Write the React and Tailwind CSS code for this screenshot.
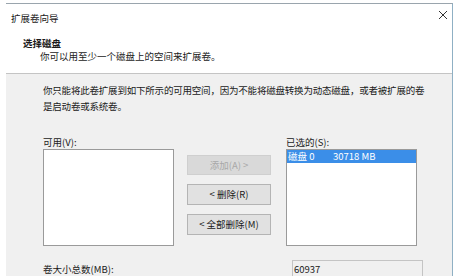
export default function App() {
  const f = { fontFamily: '"Noto Sans CJK SC", "Noto Sans", sans-serif' };
  return (
    <div className="w-[459px] h-[276px] bg-white overflow-hidden text-[#1a1a1a] text-[9.5px]" style={f}>
      <div className="ml-[6px] mt-[3px] w-[447px] h-[273px] border-t border-t-[#9aa5ad] border-r border-r-[#8fb0c4] flex flex-col">
        {/* header */}
        <div className="h-[70px] shrink-0 bg-white border-b border-b-[#c4c4c4] relative pl-[5px] pt-[7px]">
          <div className="leading-[14px]">扩展卷向导</div>
          <svg className="absolute right-[4px] top-[6px]" width="10" height="10" viewBox="0 0 10 10">
            <path d="M1 1 L9 9 M9 1 L1 9" stroke="#333" strokeWidth="1" fill="none" />
          </svg>
          <div className="pl-[12px] mt-[12px] font-bold leading-[13px]">选择磁盘</div>
          <div className="pl-[29px] leading-[13px]">你可以用至少一个磁盘上的空间来扩展卷。</div>
        </div>
        {/* body */}
        <div className="flex-1 bg-[#f0f0f0] pl-[37px] pt-[8px]">
          <div className="leading-[16px] tracking-[-0.2px]">
            <div>你只能将此卷扩展到如下所示的可用空间，因为不能将磁盘转换为动态磁盘，或者被扩展的卷</div>
            <div>是启动卷或系统卷。</div>
          </div>
          <div className="flex mt-[22px]">
            <div className="w-[131px] flex flex-col">
              <div className="leading-[13px] h-[13px]">可用(V):</div>
              <div className="h-[97px] bg-white border border-[#9a9a9a]" />
            </div>
            <div className="ml-[13px] w-[84px] flex flex-col gap-[9px] pt-[19px]">
              <div className="h-[20px] bg-[#d9d9d9] border border-[#cfcfcf] text-[#a8a8a8] flex items-center justify-center">添加(A) &gt;</div>
              <div className="h-[21px] bg-[#e1e1e1] border border-[#b4b4b4] flex items-center justify-center">&lt; 删除(R)</div>
              <div className="h-[21px] bg-[#e1e1e1] border border-[#b4b4b4] flex items-center justify-center">&lt; 全部删除(M)</div>
            </div>
            <div className="ml-[15px] w-[131px] flex flex-col">
              <div className="leading-[13px] h-[13px]">已选的(S):</div>
              <div className="h-[97px] bg-white border border-[#9a9a9a]">
                <div className="h-[13px] bg-[#3b8ee8] text-white flex items-center leading-[13px]">
                  <span className="pl-[1px] w-[46px]">磁盘 0</span>
                  <span>30718 MB</span>
                </div>
              </div>
            </div>
          </div>
          <div className="flex mt-[14px]">
            <div className="w-[249px] pt-[3px] leading-[12px]">卷大小总数(MB):</div>
            <div className="w-[131px] h-[20px] border border-[#c4c4c4] bg-[#f0f0f0] pl-[1px] pt-[2px] leading-[12px]">60937</div>
          </div>
        </div>
      </div>
    </div>
  );
}
